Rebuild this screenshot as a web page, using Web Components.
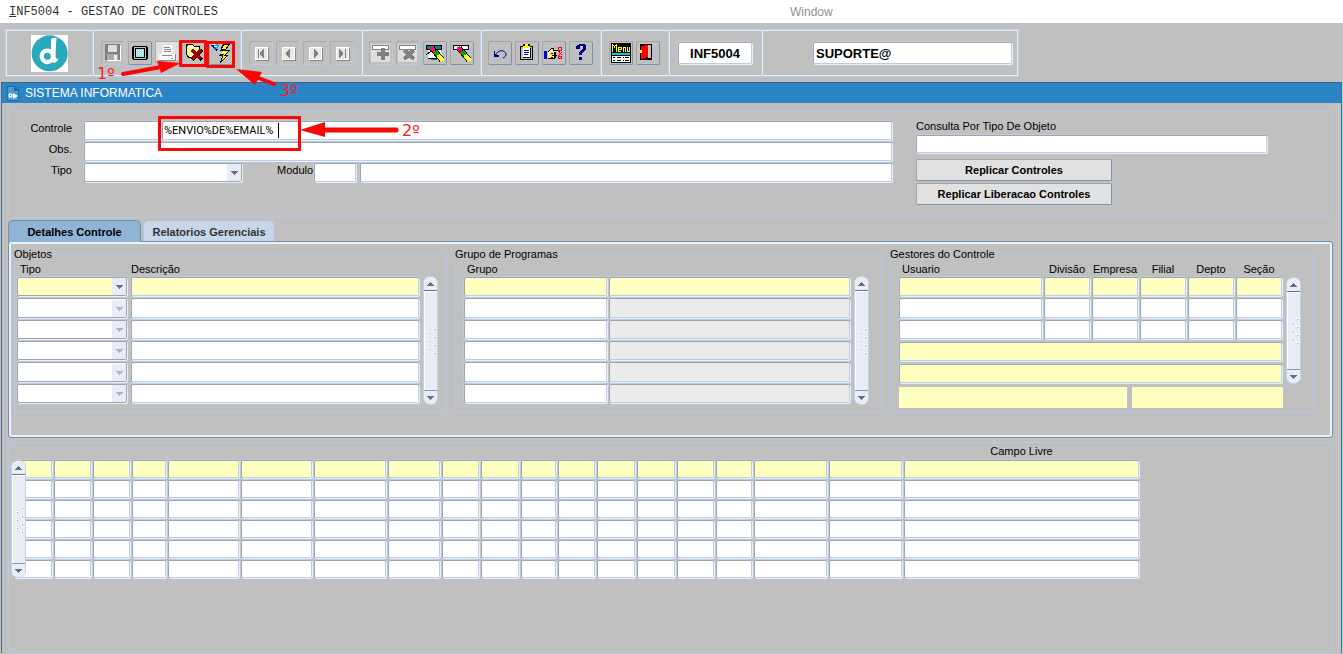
<!DOCTYPE html>
<html lang="pt-BR">
<head>
<meta charset="utf-8">
<title>INF5004 - GESTAO DE CONTROLES</title>
<style>
  html, body { margin: 0; padding: 0; }
  body { background: #c0c0c0; color: #000; font: 11px/13px "Liberation Sans", Arial, sans-serif; }
</style>
</head>
<body>
<gestao-app></gestao-app>
<script>
const FIELD = `
  *, *::before { box-sizing: border-box; }
  input { display: block; width: 100%; min-width: 0; height: 19px; margin: 0; padding: 0 1px; background: #fff; font: inherit; color: #000;
    border: 1px solid; border-color: #a2a4aa #bccce4 #bccce4 #a2a4aa; border-radius: 2px; outline: 0;
    box-shadow: -1px -1px 0 #bccce0, 1px 1px 0 #e8f0fa; }
  input.y { background: #ffffc0; }
  input.g { background: #ebebeb; }
  button { font: inherit; margin: 0; padding: 0; cursor: default; }
`;

function define(name, html, setup) {
  const tpl = document.createElement('template');
  tpl.innerHTML = html;
  customElements.define(name, class extends HTMLElement {
    connectedCallback() {
      if (this.shadowRoot) return;
      const root = this.attachShadow({ mode: 'open' });
      root.append(tpl.content.cloneNode(true));
      if (setup) setup.call(this, root);
    }
  });
}

/* Title and menu bar */
define('title-bar', `
<style>
  :host { display: grid; grid-template-columns: 781fr 553fr; align-items: center; height: 23px; padding-left: 9px; background: #fff; }
  span { font: 12px/16px "Liberation Mono", "Courier New", monospace; color: #333; }
  button { justify-self: start; border: 0; padding: 0; background: none; font: 12px/16px "Liberation Sans", Arial, sans-serif; color: #909090; }
</style>
<span><u>I</u>NF5004 - GESTAO DE CONTROLES</span><button>Window</button>`);

/* Toolbar icons, drawn on a 24x24 pixel grid */
const nav = g => `<path fill="#888" d="M7 7h13v13H7z"/><path fill="#fff" d="M6 6h13v13H6z"/><path fill="#e8e8e8" d="M7 7h11v11H7z"/><path fill="#808080" d="${g}"/>`;
const brush = `<path stroke="#000" stroke-width="6" d="M9 7L19 19"/><path stroke="#f0a" stroke-width="4" d="M8 6l3 4"/><path stroke="#f00" stroke-width="2" d="M9 9l3 4"/><path stroke="#0a0" stroke-width="4" d="M12 10l3 4"/><path stroke="#ff0" stroke-width="4" d="M15 14l5 6"/><path stroke="#fff" d="M17 15l4 4"/>`;
const ICONS = {
  salvar: `<path fill="#808080" d="M4 3h15v17H5l-1-1z"/><path fill="#dedede" d="M7 4h9v7H7z"/><path fill="#a8a8a8" d="M6 13h11v6H6z"/><path fill="#eee" d="M13 14h3v5h-3z"/><path fill="#fff" d="M19 5h1v15H6v-1h13z"/>`,
  tela: `<path fill="#000" d="M5 5h14v1h1v12h-1v1H5v-1H4V6h1z"/><path fill="#c0c0c0" d="M6 6h12v12H6z"/><path fill="#000" d="M7 7h10v10H7z"/><path fill="#9fe3e3" d="M8 8h8v8H8z"/><path stroke="#fff" stroke-dasharray="1 1" d="M8 9.500h8M8 11.500h8M8 13.500h8"/>`,
  imprimir: `<path fill="#e0e0e0" d="M1 1h22v18H1z"/><path fill="#fff" d="M8 4h9l1 9H7z"/><path stroke="#808080" d="M9 6.500h6M9 8.500h7M9 10.500h7M4 19.500h15"/><path fill="#fafafa" d="M4 13h16v7H4z"/><path stroke="#888" d="M4 19.500h16M7 14.500h10M16 17.500h2M20.500 13v7"/>`,
  cancelar: `<path fill="#000" d="M4 3h6l2 2h6v12H6v-1H5v-2H4z"/><path fill="#ff8" d="M5 5l1-1h4l2 2h5v10H7l-2-3z"/><path stroke="#fff" stroke-dasharray="1 1" d="M6 6.500h11M6 9.500h11M6 12.500h11"/><path stroke="#000" stroke-width="4" d="M10 9l10 10M20 9L10 19"/><path stroke="#a00000" stroke-width="3" d="M10 9l9 9M19 9L10 18"/>`,
  executar: `<path fill="#008" d="M2 4h2l5 5-2 1-3-3z"/><path fill="#0bd" d="M5 4l4-1 1 2-3 4z"/><path stroke="#fff" d="M3 3.500h3M5 5.500h3"/><path fill="#000" d="M14 3h7l-4 6h4l-4 5h2l-8 8 2-7h-3l4-5h-3z"/><path fill="#ff0" d="M15 4h4l-4 6h4l-4 5h2l-4 4 2-6h-3l4-5h-3z"/>`,
  primeiro: nav('M9 8h1v9H9zM15 8v9h-1v-1h-1v-1h-1v-1h-1v-3h1v-1h1V9h1V8z'),
  anterior: nav('M14 8v9h-1v-1h-1v-1h-1v-1h-1v-3h1v-1h1V9h1V8z'),
  proximo: nav('M11 8v9h1v-1h1v-1h1v-1h1v-3h-1v-1h-1V9h-1V8z'),
  ultimo: nav('M9 8v9h1v-1h1v-1h1v-1h1v-3h-1v-1h-1V9h-1V8zM15 8h1v9h-1z'),
  inserir: `<path fill="#ddd" d="M2 3h19v18H2z"/><path fill="#808080" d="M3 4h17v5H3z"/><path fill="#fff" d="M4 5h15v3H4z"/><path fill="#808080" d="M12 7h4v4h4v4h-4v4h-4v-4H8v-4h4z"/>`,
  excluir: `<path fill="#ddd" d="M2 3h19v18H2z"/><path fill="#808080" d="M3 4h17v5H3z"/><path fill="#fff" d="M4 5h15v3H4z"/><path stroke="#808080" stroke-width="4" d="M8 9l10 9M18 9L8 18"/>`,
  consultar: `<path fill="#000" d="M3 4h16v5H3z"/><path fill="#088" d="M4 5h14v3H4z"/><path fill="#fff" d="M5 9h13l2 9H5z"/><path stroke="#088" stroke-width="2" d="M8 18h6"/><path stroke="#000" d="M3 14l5-4M5 17h9"/>${brush}`,
  limpar: `<path fill="#000" d="M3 4h16v5H3z"/><path fill="#fff" d="M4 5h14v3H4z"/>${brush}`,
  desfazer: `<path fill="none" stroke="#008" stroke-width="1" shape-rendering="auto" d="M8 14c1-5 9-6 10-1 0 2-1 3-3 4"/><path fill="#008" d="M6 10h1v3h1v1h3v2H6z"/>`,
  colar: `<path fill="#000" d="M5 5h13v14H5z"/><path fill="#c0c0c0" d="M6 6h11v12H6z"/><path fill="#000" d="M8 7h8v10H8z"/><path fill="#fff" d="M8 7h7v9H8z"/><path fill="#000" d="M8 3h7v4H8z"/><path fill="#ff0" d="M10 3h3v2h2v2H8V5h2z"/><path stroke="#00f" d="M9 9.500h5M9 11.500h5M9 13.500h4"/>`,
  recortar: `<path fill="#00c" d="M2 10h3v8H2z"/><path fill="#000" d="M6 10l4-3h2v2h6v2h-4v5l-2 2H6z"/><path fill="#fe7" d="M6 11l4-3h1v2h5v1h-4v6H6z"/><path stroke="#000" stroke-dasharray="2 1" d="M9 12.500h6M10 14.500h5M9 16.500h4"/><path fill="none" stroke="#f00" d="M16.500 6.500h3v3h-3zM16.500 15.500h3v2h-3zM16 10l4 4M16 15l4-4"/>`,
  ajuda: `<path fill="#008" d="M8 4h2V3h6v1h1v5h-1v1h-1v1h-1v1h-1v2h-3v-3h1v-1h1V9h1V8h1V5h-3v3H7V5h1zM10 16h3v3h-3z"/>`,
  menu: `<path fill="#000" d="M2 2h20v10H2zM2 12h20v10H2z"/><path fill="#0cd" d="M3 12h18v2H3z"/><path fill="#fff" d="M3 15h18v6H3z"/><path stroke="#000" d="M4 16.500h2M8 16.500h4M14 16.500h1M16 16.500h4M4 19.500h2M8 19.500h4M14 19.500h1M16 19.500h4"/><path fill="none" stroke="#ff0" d="M3.500 11V3M4 4.500h1M5.500 5v2M6 4.500h1M7.500 11V3M9.500 6v5M9 6.500h3M9 8.500h3M12.500 6v3M9 10.500h3M14.500 11V6M14 6.500h2M16.500 6v5M18.500 6v5M18 10.500h3M20.500 6v5"/>`,
  sair: `<path fill="#fff" d="M5 3h11v15H5z"/><path fill="#000" d="M4 3h12v16H4z"/><path fill="#c0c0c0" d="M12 4h3v13h-3z"/><path fill="#f00" d="M5 5l7-1v12l-7 2z"/><path fill="#ff0" d="M4 9h2v3H4zM3 7h1v1H3z"/>`
};
define('tool-button', `
<style>
  :host { display: block; }
  button { display: block; box-sizing: border-box; width: 24px; height: 24px; margin: 0; padding: 0; background: #c0c0c0; border: 1px solid; border-color: #a4a4a4 #7594b4 #7594b4 #a4a4a4; border-radius: 2px; }
  button:disabled { border-color: #acacac #b8cae0 #b8cae0 #acacac; }
  svg { display: block; margin: -1px; width: 24px; height: 24px; }
</style><button></button>`, function (root) {
  const b = root.querySelector('button');
  b.setAttribute('aria-label', this.getAttribute('icon'));
  b.disabled = this.hasAttribute('off');
  b.innerHTML = `<svg viewBox="0 0 24 24" fill="none" shape-rendering="crispEdges">${ICONS[this.getAttribute('icon')]}</svg>`;
});

define('tool-bar', `
<style>${FIELD}
  :host { display: block; padding: 6px 6px 6px 5px; }
  .frame { display: grid; width: max-content; grid-template-columns: 87px 148px 121px 119px 120px 68px 93px 257px; height: 48px; border: solid #b8cdec; border-width: 1px 1px 1px 0; box-shadow: inset 0 1px #e8f0fa, inset 0 -1px #e8f0fa, inset -1px 0 #e8f0fa; }
  .cell { display: flex; align-items: center; justify-content: center; gap: 3px; border-left: 1px solid #b8cdec; box-shadow: inset 1px 0 #e8f0fa; }
  .user { justify-content: flex-end; padding-right: 6px; }
  input { height: 22px; font: bold 13px/16px "Liberation Sans", Arial, sans-serif; }
  .code { width: 74px; text-align: center; }
  .name { width: 199px; padding: 0 2px; }
</style>
<div class="frame">
  <div class="cell"><svg width="37" height="37" viewBox="0 0 111 111"><path fill="#fff" d="M0 0h111v111H0z"/><circle cx="56" cy="55" r="54" fill="#2aa9bd"/><circle cx="49" cy="64" r="17" fill="none" stroke="#fff" stroke-width="13"/><path fill="#fff" d="M60 13c4-5 11-6 17-4-2 10-3 40-3 57 0 5 3 7 8 4-2 10-9 15-15 13-5-1-7-6-7-13z"/></svg></div>
  <div class="cell"><tool-button icon="salvar" off></tool-button><tool-button icon="tela"></tool-button><tool-button icon="imprimir" off></tool-button><tool-button icon="cancelar"></tool-button><tool-button icon="executar"></tool-button></div>
  <div class="cell"><tool-button icon="primeiro" off></tool-button><tool-button icon="anterior" off></tool-button><tool-button icon="proximo" off></tool-button><tool-button icon="ultimo" off></tool-button></div>
  <div class="cell"><tool-button icon="inserir" off></tool-button><tool-button icon="excluir" off></tool-button><tool-button icon="consultar"></tool-button><tool-button icon="limpar"></tool-button></div>
  <div class="cell"><tool-button icon="desfazer"></tool-button><tool-button icon="colar"></tool-button><tool-button icon="recortar"></tool-button><tool-button icon="ajuda"></tool-button></div>
  <div class="cell"><tool-button icon="menu"></tool-button><tool-button icon="sair"></tool-button></div>
  <div class="cell"><input class="code" aria-label="Programa" value="INF5004"></div>
  <div class="cell user"><input class="name" aria-label="Usuario" value="SUPORTE@"></div>
</div>`);

/* Drop-down list */
define('pick-list', `
<style>
  :host { display: grid; height: 19px; }
  select, svg { grid-area: 1 / 1; }
  select { appearance: none; box-sizing: border-box; width: 100%; min-width: 0; height: 100%; margin: 0; padding: 0; background: #fff; border: 1px solid #a2a4aa; border-radius: 2px; box-shadow: -1px -1px 0 #bccce0, 1px 1px 0 #e8f0fa; font: inherit; opacity: 1; }
  :host([current]) select { background: #ffffc0; }
  svg { justify-self: end; align-self: center; margin-right: 1px; width: 14px; height: 17px; background: #e8edf5; fill: #b0b4bc; pointer-events: none; }
  :host([on]) svg { fill: #6a6e88; }
</style><select></select><svg viewBox="0 0 14 17" shape-rendering="crispEdges"><path d="M4 7h7v1h-1v1H9v1H8v1H7v-1H6V9H5V8H4z"/></svg>`, function (root) {
  const s = root.querySelector('select');
  s.setAttribute('aria-label', this.getAttribute('label') || 'Tipo');
  s.disabled = !this.hasAttribute('on');
});

/* Vertical record scroller */
define('record-scroll', `
<style>
  :host { display: flex; flex-direction: column; box-sizing: border-box; width: 15px; background: #e8edf5; border: 1px solid #c2d2e8; border-radius: 7px; overflow: hidden; }
  button { display: grid; place-items: center; height: 14px; margin: 0; padding: 0; border: 0; background: #e8edf5; }
  .up { border-bottom: 1px solid #6a6e88; }
  .down { border-top: 1px solid #7a9cc0; }
  .track { flex: 1; display: grid; place-items: center; border-left: 1px solid #fff; border-top: 1px solid #fff; }
  svg { display: block; }
</style>
<button class="up" aria-label="Subir"><svg width="7" height="4" shape-rendering="crispEdges" fill="#6a6e88"><path d="M3 0h1v1h1v1h1v1h1v1H0V3h1V2h1V1h1z"/></svg></button>
<div class="track"><svg width="9" height="28" shape-rendering="crispEdges"><path stroke="#fff" stroke-width="2" d="M6 2h2M1 6h2M6 10h2M1 14h2M6 18h2M1 22h2M6 26h2"/><path fill="#7a9cc0" d="M7 2h1v1H7zM2 6h1v1H2zM7 10h1v1H7zM2 14h1v1H2zM7 18h1v1H7zM2 22h1v1H2zM7 26h1v1H7z"/></svg></div>
<button class="down" aria-label="Descer"><svg width="7" height="4" shape-rendering="crispEdges" fill="#6a6e88"><path d="M0 0h7v1H6v1H5v1H4v1H3V3H2V2H1V1H0z"/></svg></button>`);

/* Multi-record block: first record is the current one */
define('record-table', `
<style>${FIELD}
  :host { display: block; }
  table, thead, tbody { display: block; }
  tr { display: grid; grid-template-columns: var(--cols); column-gap: var(--gap, 2px); }
  th { height: var(--head, 14px); padding: 0; font-weight: normal; line-height: var(--line, 12px); text-align: left; white-space: nowrap; }
  th.c { text-align: center; margin: 0 -4px; }
  th.i { padding-left: 3px; }
  td { padding: 0; }
  tbody { display: grid; row-gap: 2px; }
  td > * { height: 19px; }
  :host([tall]) tr:nth-child(3n + 2) td > * { height: 20px; }
  :host([small]) td > * { height: 18px; }
</style><table><thead><tr></tr></thead><tbody></tbody></table>`, function (root) {
  const heads = this.getAttribute('heads').split('|');
  const kinds = (this.getAttribute('kinds') || '').split('|');
  root.querySelector('thead tr').innerHTML = heads.map(h => {
    const m = h.match(/^([.>]?)(.*)$/);
    return `<th class="${m[1] === '.' ? 'c' : m[1] === '>' ? 'i' : ''}">${m[2]}</th>`;
  }).join('');
  let rows = '';
  for (let r = 0; r < +this.getAttribute('rows'); r++) {
    rows += '<tr>' + heads.map((h, c) => kinds[c] === 'select'
      ? `<td><pick-list ${r ? '' : 'current on'}></pick-list></td>`
      : `<td><input aria-label="${h.replace(/^[.>]/, '') || 'Campo'}" class="${r ? (kinds[c] === 'grey' ? 'g' : '') : 'y'}"></td>`).join('') + '</tr>';
  }
  root.querySelector('tbody').innerHTML = rows;
});

/* Titled frame */
define('group-box', `
<style>
  :host { display: block; min-width: 0; }
  fieldset { box-sizing: border-box; min-width: 0; height: 165px; margin: 0; padding: 2px var(--pr) 0 var(--pl); border: 1px solid #b4c9ea; border-radius: 4px; }
  legend { padding: 0 1px 0 0; margin-left: calc(-1px - var(--pl)); height: 13px; }
</style><fieldset><legend></legend><slot></slot></fieldset>`, function (root) {
  root.querySelector('legend').textContent = this.getAttribute('title-text');
});

define('control-form', `
<style>${FIELD}
  :host { display: grid; grid-template-columns: 1fr 351px; column-gap: 24px; box-sizing: border-box; height: 107px; padding: 9px 65px 0 0; border: 1px solid #b4c9ea; border-radius: 4px; }
  .left { display: grid; grid-template-columns: 63px 1fr; column-gap: 12px; row-gap: 2px; align-content: start; }
  label { line-height: 15px; text-align: right; }
  .row { display: flex; }
  .row > * { flex: none; }
  .a { width: 77px; }
  .q { position: relative; flex: 1; margin-left: 1px; }
  .q input { font-family: Roboto, "Liberation Sans", sans-serif; }
  .caret { position: absolute; left: 116px; top: 2px; width: 1px; height: 15px; background: #000; }
  pick-list { width: 158px; }
  .mod { margin: 0 1px 0 35px; }
  .m { width: 42px; margin-right: 4px; }
  .row .d { flex: 1; }
  .right { display: flex; flex-direction: column; align-items: flex-start; margin-top: -1px; }
  .right label { line-height: 13px; margin-bottom: 2px; }
  .right input { height: 18px; margin-bottom: 6px; }
  button { width: 196px; height: 22px; margin-bottom: 2px; background: #e1e1e1; border: 1px solid; border-color: #a4a4a4 #7594b4 #7594b4 #a4a4a4; border-radius: 2px; font-weight: bold; color: #000; }
</style>
<div class="left">
  <label for="c">Controle</label>
  <div class="row"><input class="a" id="c"><div class="q"><input id="cq" aria-label="Descrição do controle" value="%ENVIO%DE%EMAIL%"><span class="caret"></span></div></div>
  <label for="o">Obs.</label><input id="o">
  <label>Tipo</label>
  <div class="row"><pick-list on label="Tipo"></pick-list><label class="mod" for="m">Modulo</label><input class="m" id="m"><input class="d" aria-label="Descrição do modulo"></div>
</div>
<div class="right"><label for="t">Consulta Por Tipo De Objeto</label><input id="t"><button>Replicar Controles</button><button>Replicar Liberacao Controles</button></div>`);

define('detail-tabs', `
<style>${FIELD}
  :host { display: block; margin-top: 2px; }
  .tabs { display: flex; align-items: flex-end; gap: 3px; height: 21px; }
  button { width: 133px; height: 22px; padding-top: 2px; margin-bottom: -1px; border: 1px solid #6f8fb0; border-bottom: 0; border-radius: 5px 5px 0 0; background: #8fb4d6; font-weight: bold; color: #000; z-index: 1; }
  button + button { width: 130px; height: 20px; margin-bottom: 0; border-color: #c8d6ea; background: #c8d6ea; color: #333; }
  .page { display: grid; grid-template-columns: 433fr 427fr 424fr; column-gap: 8px; height: 197px; padding: 6px 18px 0 5px; border: 1px solid #6f8fb0; border-radius: 3px; box-shadow: inset 0 0 0 2px #edf1f7; }
  .block { display: flex; gap: 4px; }
  .main { flex: 1; min-width: 0; }
  record-scroll { margin-top: 13px; height: 129px; }
  .gestores record-scroll { margin-top: 14px; height: 107px; }
  .wide { margin-top: 3px; }
  .foot { display: grid; grid-template-columns: 229fr 151fr; gap: 5px; margin: 3px 18px 0 0; }
  .foot input { height: 21px; border: 0; border-radius: 0; box-shadow: none; }
</style>
<div class="tabs" role="tablist"><button role="tab" aria-selected="true">Detalhes Controle</button><button role="tab">Relatorios Gerenciais</button></div>
<div class="page">
  <group-box title-text="Objetos" style="--pl:2px;--pr:8px"><div class="block">
    <record-table class="main" tall rows="6" heads=">Tipo|Descrição" kinds="select|" style="--cols:110px 1fr;--gap:4px"></record-table><record-scroll></record-scroll></div></group-box>
  <group-box title-text="Grupo de Programas" style="--pl:8px;--pr:12px"><div class="block">
    <record-table class="main" tall rows="6" heads=">Grupo|" kinds="|grey" style="--cols:143px 1fr"></record-table><record-scroll></record-scroll></div></group-box>
  <group-box title-text="Gestores do Controle" style="--pl:8px;--pr:12px">
    <div class="block gestores"><div class="main">
      <record-table tall rows="3" heads=">Usuario|.Divisão|.Empresa|.Filial|.Depto|.Seção" style="--cols:1fr 46px 46px 46px 46px 46px"></record-table>
      <input class="y wide" aria-label="Nome"><input class="y wide" aria-label="Setor">
    </div><record-scroll></record-scroll></div>
    <div class="foot"><input class="y" aria-label="Inclusao"><input class="y" aria-label="Alteracao"></div>
  </group-box>
</div>`);

define('free-grid', `
<style>
  :host { position: relative; display: block; flex: 1; box-sizing: border-box; margin-top: 4px; padding: 0 193px 0 5px; border: 1px solid #b4c9ea; border-radius: 4px; }
  record-scroll { position: absolute; left: 2px; top: 17px; height: 118px; }
</style>
<record-table small rows="6" heads="||||||||||||||||||.Campo Livre" style="--head:17px;--line:17px;--cols:38px 37px 37px 34px 71px 71px 72px 52px 37px 38px 35px 37px 38px 38px 37px 36px 73px 73px 1fr"></record-table>
<record-scroll></record-scroll>`);

define('form-window', `
<style>
  :host { display: flex; flex-direction: column; flex: 1; box-sizing: border-box; margin: 0 1px 1px; border: 1px solid #4a6a90; border-bottom: 0; border-top-color: #44618a; box-shadow: 1px 0 #9fdbe8; }
  header { display: flex; align-items: center; gap: 6px; height: 20px; padding-left: 5px; background: #2b84c6; }
  h1 { margin: 0; font: 12px/16px "Liberation Sans", Arial, sans-serif; color: #fff; }
  main { flex: 1; display: flex; flex-direction: column; padding: 8px 8px 0 6px; }
</style>
<header><svg width="12" height="15" viewBox="0 0 12 15"><path fill="#1c6cab" d="M0 0h8l4 4v11H0z"/><path fill="#4b9ad2" d="M1 1h6v4h4v9H1z"/><circle cx="3.500" cy="9.500" r="1.500" fill="none" stroke="#fff" stroke-width="1.500"/><path fill="#fff" d="M6 7l5 3-5 3z"/></svg><h1>SISTEMA INFORMATICA</h1></header>
<main><slot></slot></main>`);

/* Numbered step marks laid over the form */
define('step-marks', `
<style>
  :host { position: absolute; left: 0; top: 0; pointer-events: none; color: #f91d1d; font: 16px/20px "DejaVu Sans", "Noto Sans", sans-serif; }
  i { position: absolute; box-sizing: border-box; border: 3px solid #f90606; border-radius: 1px; }
  span { position: absolute; }
  svg { display: block; }
</style>
<svg width="440" height="160" fill="#f90606" stroke="#f90606" stroke-linecap="round"><path stroke-width="4" d="M123 74l38-7M274 84l-18-7"/><path stroke-width="5" d="M323 130h73"/><path stroke="none" d="M181 63l-24-2 4 12zM236 69l26 3-7 13zM300 130l25-8v15z"/></svg>
<i style="left:179px;top:40px;width:28px;height:27px"></i>
<i style="left:206px;top:41px;width:29px;height:27px"></i>
<i style="left:158px;top:116px;width:143px;height:35px"></i>
<span style="left:97px;top:64px">1º</span><span style="left:280px;top:81px">3º</span><span style="left:402px;top:121px">2º</span>`);

define('gestao-app', `
<style>:host { position: relative; display: flex; flex-direction: column; min-height: 100vh; }
  tool-bar { margin-bottom: -1px; }
</style>
<title-bar></title-bar><tool-bar></tool-bar>
<form-window><control-form></control-form><detail-tabs></detail-tabs><free-grid></free-grid></form-window>
<step-marks></step-marks>`);
</script>
</body>
</html>
